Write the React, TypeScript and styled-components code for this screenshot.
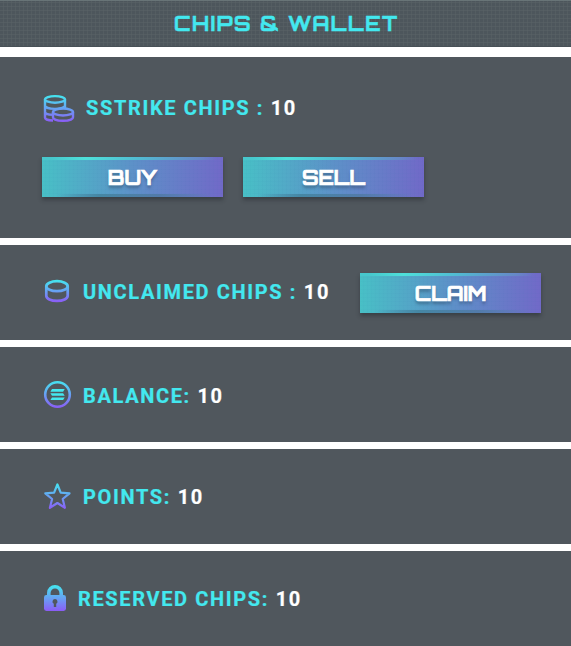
import React from "react";
import styled, { createGlobalStyle } from "styled-components";

const GlobalStyle = createGlobalStyle`
  * { box-sizing: border-box; }
  body { margin: 0; background: #fff; }
`;

const Page = styled.main`
  width: 571px;
  height: 646px;
  display: flex;
  flex-direction: column;
  gap: 7px;
  overflow: hidden;
  font-family: Roboto, sans-serif;
`;

const Header = styled.header`
  height: 47px;
  margin-bottom: 3px;
  display: flex;
  align-items: center;
  justify-content: center;
  border-top: 1px solid #687477;
  border-bottom: 1px solid #485157;
  background:
    repeating-linear-gradient(90deg, transparent 0 3px, rgba(88, 97, 101, .6) 3px 4px),
    repeating-linear-gradient(0deg, #4d565c 0 3px, #545d62 3px 4px);
`;

const Title = styled.h1`
  margin: 0;
  padding-left: 2px;
  color: #43e8ef;
  font: 700 20px/24px Orbitron, Inter, sans-serif;
  letter-spacing: 1.62px;
  white-space: nowrap;
  -webkit-text-stroke: .5px currentColor;
`;

const Panel = styled.section<{ $height?: number; $top?: number }>`
  height: ${(p) => p.$height ?? 95}px;
  flex-shrink: 0;
  padding: ${(p) => p.$top ?? 28}px 30px 0 42px;
  background: #50575d;
`;

const Row = styled.div<{ $height?: number }>`
  height: ${(p) => p.$height ?? 40}px;
  display: flex;
  align-items: center;
`;

const IconBox = styled.span<{ $width: number }>`
  width: ${(p) => p.$width}px;
  height: 32px;
  flex-shrink: 0;
  svg { display: block; overflow: visible; }
`;

const Label = styled.span<{ $raise?: number }>`
  padding-bottom: ${(p) => p.$raise ?? 0}px;
  color: #43e8ef;
  font-size: 20px;
  line-height: 24px;
  font-weight: 700;
  letter-spacing: 1.64px;
  white-space: pre;
  -webkit-text-stroke: .2px currentColor;
`;

const Value = styled.span`
  color: #fff;
`;

const Buttons = styled.div`
  display: flex;
  gap: 20px;
  margin-top: 33px;
`;

const Button = styled.button<{ $end?: boolean }>`
  width: 181px;
  height: 40px;
  margin: 0 0 0 ${(p) => (p.$end ? "auto" : "0")};
  padding: 2px 0 0;
  border: 0;
  flex-shrink: 0;
  display: flex;
  align-items: center;
  justify-content: center;
  color: #fff;
  font: 700 20px/24px Orbitron, Inter, sans-serif;
  -webkit-text-stroke: .7px currentColor;
  text-shadow: 0 3px 3px rgba(30, 50, 70, .4);
  background:
    linear-gradient(90deg, #47c7cc 5%, #4ee0da 24%, #51bbd2 53%, #6688c7 86%, transparent 96%) top / 100% 3px no-repeat,
    linear-gradient(90deg, transparent 8%, #4587a4 32%, #527baa 65%, transparent 94%) bottom / 100% 3px no-repeat,
    repeating-linear-gradient(90deg, transparent 0 3px, rgba(30, 100, 150, .025) 3px 4px),
    repeating-linear-gradient(0deg, transparent 0 3px, rgba(30, 100, 150, .025) 3px 4px),
    linear-gradient(90deg, #48c0c6, #5d91c8 50%, #7169c8);
  box-shadow: 0 3px 4px rgba(25, 30, 36, .4);
`;

function Gradient({ id, top, bottom }: { id: string; top: number; bottom: number }) {
  return (
    <linearGradient id={id} gradientUnits="userSpaceOnUse" x1="0" y1={top} x2="0" y2={bottom}>
      <stop stopColor="#43e8ef" />
      <stop offset="1" stopColor="#8b5cf6" />
    </linearGradient>
  );
}

function CoinsIcon() {
  return (
    <svg width="32" height="32" viewBox="0 0 32 32" fill="none" stroke="url(#coins)" strokeWidth="2.4">
      <defs><Gradient id="coins" top={3} bottom={30} /></defs>
      <ellipse cx="13" cy="7.4" rx="10" ry="3.3" />
      <path d="M3 7.4v18.1c0 1.8 3.5 3 8 3M23 7.4V16M3 13.6c0 2 4.3 3.3 10 3.3s10-1.3 10-3.3M3 19.7c0 1.9 3.3 3 8 3" />
      <ellipse cx="21" cy="20" rx="10" ry="3.5" />
      <path d="M11 20v5.2c0 2.2 4.2 3.6 10 3.6s10-1.4 10-3.6V20" />
    </svg>
  );
}

function ChipIcon() {
  return (
    <svg width="32" height="32" viewBox="0 0 32 32" fill="none" stroke="url(#chip)" strokeWidth="2.7">
      <defs><Gradient id="chip" top={3} bottom={25} /></defs>
      <ellipse cx="15" cy="9.2" rx="10.7" ry="5" />
      <path d="M4.3 9.2v9.6c0 3 4.6 5.1 10.7 5.1s10.7-2.1 10.7-5.1V9.2" />
    </svg>
  );
}

function SolanaIcon() {
  return (
    <svg width="32" height="32" viewBox="0 0 32 32">
      <defs><Gradient id="solana" top={0} bottom={28} /></defs>
      <circle cx="15.5" cy="14.5" r="12.3" fill="none" stroke="url(#solana)" strokeWidth="2.6" />
      <path d="M10 9h12.7l-1.6 2.7H8.4zM8.4 13.2h12.7l1.6 2.6H10zM10 17.4h12.7l-1.6 2.7H8.4z" fill="#43e8ef" />
    </svg>
  );
}

function StarIcon() {
  return (
    <svg width="32" height="32" viewBox="0 0 32 32" fill="none">
      <defs><Gradient id="star" top={2} bottom={28} /></defs>
      <path d="M15.4 3.5l3.3 8.1 8.8.7-6.8 5.7 2.2 8.8-7.5-4.8-7.5 4.8 2.2-8.8-6.8-5.7 8.8-.7z" stroke="url(#star)" strokeWidth="2.2" strokeLinejoin="round" />
    </svg>
  );
}

function LockIcon() {
  return (
    <svg width="32" height="32" viewBox="0 0 32 32">
      <defs><Gradient id="lock" top={2} bottom={28} /></defs>
      <path d="M6.8 13V9.9a6.2 6.2 0 0 1 12.4 0V13" fill="none" stroke="url(#lock)" strokeWidth="3.6" />
      <rect x="2" y="12" width="22" height="16" rx="2.4" fill="url(#lock)" />
      <path d="M13 16a2.5 2.5 0 0 1 1.2 4.7V24h-2.4v-3.3A2.5 2.5 0 0 1 13 16z" fill="#50575d" />
    </svg>
  );
}

export default function App() {
  return (
    <>
      <GlobalStyle />
      <Page>
        <Header><Title>CHIPS &amp; WALLET</Title></Header>
        <Panel $height={181} $top={35}>
          <Row $height={32}>
            <IconBox $width={44}><CoinsIcon /></IconBox>
            <Label>SSTRIKE CHIPS : <Value>10</Value></Label>
          </Row>
          <Buttons>
            <Button>BUY</Button>
            <Button>SELL</Button>
          </Buttons>
        </Panel>
        <Panel>
          <Row>
            <IconBox $width={41}><ChipIcon /></IconBox>
            <Label $raise={2}>UNCLAIMED CHIPS : <Value>10</Value></Label>
            <Button $end>CLAIM</Button>
          </Row>
        </Panel>
        <Panel>
          <Row $height={42}>
            <IconBox $width={41}><SolanaIcon /></IconBox>
            <Label>BALANCE: <Value>10</Value></Label>
          </Row>
        </Panel>
        <Panel>
          <Row>
            <IconBox $width={41}><StarIcon /></IconBox>
            <Label>POINTS: <Value>10</Value></Label>
          </Row>
        </Panel>
        <Panel>
          <Row>
            <IconBox $width={36}><LockIcon /></IconBox>
            <Label>RESERVED CHIPS: <Value>10</Value></Label>
          </Row>
        </Panel>
      </Page>
    </>
  );
}
